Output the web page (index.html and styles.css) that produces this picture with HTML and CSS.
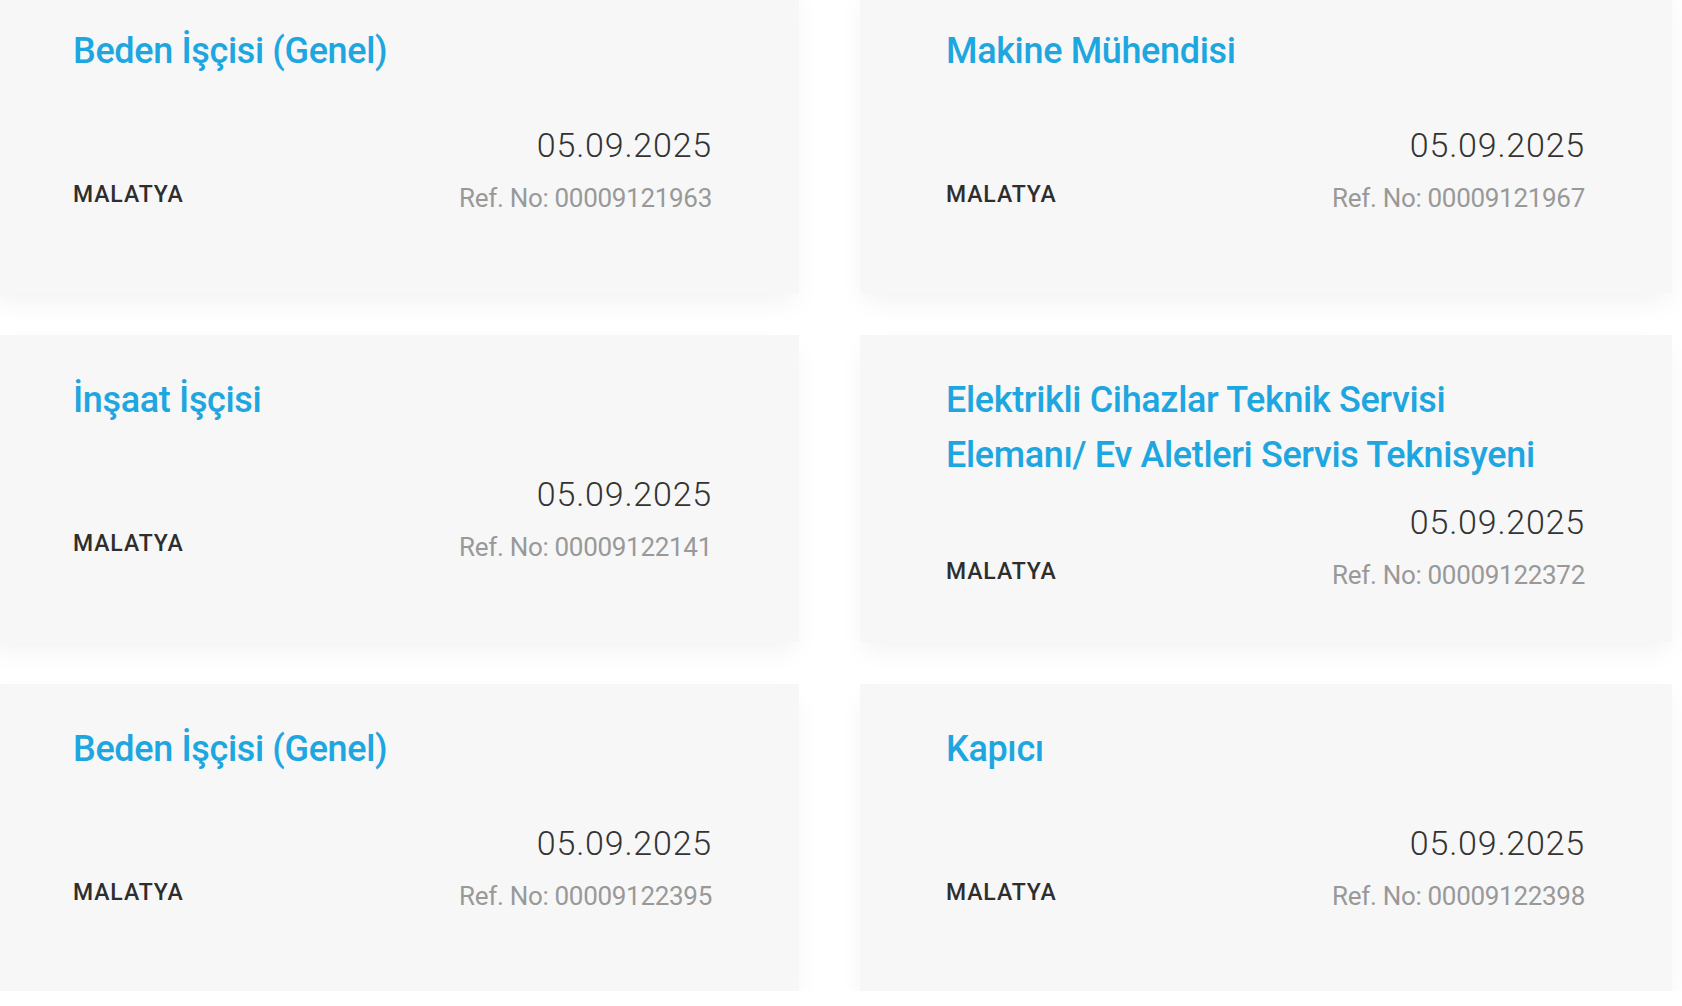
FILE: index.html
```html
<!DOCTYPE html>
<html lang="tr">
<head>
<meta charset="utf-8">
<title>İlanlar</title>
<link rel="stylesheet" href="styles.css">
</head>
<body>
<div class="list">
  <div class="card">
    <div class="title">Beden İşçisi (Genel)</div>
    <div class="meta">
      <div class="loc">MALATYA</div>
      <div class="right">
        <div class="date">05.09.2025</div>
        <div class="ref">Ref. No: 00009121963</div>
      </div>
    </div>
  </div>
  <div class="card">
    <div class="title">Makine Mühendisi</div>
    <div class="meta">
      <div class="loc">MALATYA</div>
      <div class="right">
        <div class="date">05.09.2025</div>
        <div class="ref">Ref. No: 00009121967</div>
      </div>
    </div>
  </div>
  <div class="card">
    <div class="title">İnşaat İşçisi</div>
    <div class="meta">
      <div class="loc">MALATYA</div>
      <div class="right">
        <div class="date">05.09.2025</div>
        <div class="ref">Ref. No: 00009122141</div>
      </div>
    </div>
  </div>
  <div class="card">
    <div class="title">Elektrikli Cihazlar Teknik Servisi Elemanı/ Ev Aletleri Servis Teknisyeni</div>
    <div class="meta">
      <div class="loc">MALATYA</div>
      <div class="right">
        <div class="date">05.09.2025</div>
        <div class="ref">Ref. No: 00009122372</div>
      </div>
    </div>
  </div>
  <div class="card">
    <div class="title">Beden İşçisi (Genel)</div>
    <div class="meta">
      <div class="loc">MALATYA</div>
      <div class="right">
        <div class="date">05.09.2025</div>
        <div class="ref">Ref. No: 00009122395</div>
      </div>
    </div>
  </div>
  <div class="card">
    <div class="title">Kapıcı</div>
    <div class="meta">
      <div class="loc">MALATYA</div>
      <div class="right">
        <div class="date">05.09.2025</div>
        <div class="ref">Ref. No: 00009122398</div>
      </div>
    </div>
  </div>
</div>
</body>
</html>
```
FILE: styles.css
```css
html, body {
  margin: 0;
  padding: 0;
  background: #ffffff;
  overflow: hidden;
}

body {
  font-family: Roboto, "Liberation Sans", Arial, sans-serif;
}

.list {
  display: grid;
  grid-template-columns: 812px 812px;
  column-gap: 61px;
  row-gap: 42px;
  margin: -14px 0 0 -13px;
}

.card {
  box-sizing: border-box;
  height: 307px;
  background: #f7f7f7;
  padding: 38px 87px 31px 86px;
  display: flex;
  flex-direction: column;
  box-shadow: 0 12px 26px -4px rgba(0, 0, 0, 0.055);
}

.title {
  font-size: 36px;
  line-height: 55px;
  font-weight: 500;
  letter-spacing: -0.35px;
  color: #1ea6e0;
  max-width: 600px;
}

.meta {
  margin: auto 0;
  display: flex;
  justify-content: space-between;
  align-items: flex-end;
}

.loc {
  font-size: 23px;
  line-height: 30px;
  font-weight: 500;
  letter-spacing: 0.9px;
  color: #2e2e2e;
  margin-bottom: 6px;
}

.right {
  text-align: right;
}

.date {
  font-size: 34px;
  line-height: 40px;
  font-weight: 300;
  letter-spacing: 0.8px;
  color: #333333;
}

.ref {
  margin-top: 15px;
  font-size: 26px;
  line-height: 36px;
  font-weight: 400;
  letter-spacing: -0.3px;
  color: #999999;
}
```
